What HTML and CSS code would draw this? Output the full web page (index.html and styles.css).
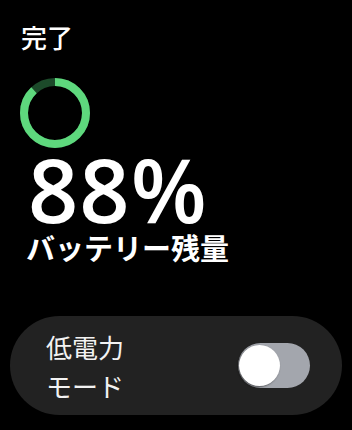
FILE: index.html
```html
<!DOCTYPE html>
<html lang="ja">
<head>
<meta charset="utf-8">
<link rel="stylesheet" href="styles.css">
</head>
<body>
<div class="screen">
  <div class="title">完了</div>
  <svg class="ring" width="70" height="70" viewBox="0 0 70 70">
    <circle cx="35" cy="35" r="31" fill="none" stroke="#1c4a2a" stroke-width="8"/>
    <circle cx="35" cy="35" r="31" fill="none" stroke="#5ed87d" stroke-width="8"
      stroke-dasharray="171.4 194.8" transform="rotate(-90 35 35)"/>
  </svg>
  <div class="pct">88%</div>
  <div class="label">バッテリー残量</div>
  <div class="card">
    <div class="card-text">低電力<br>モード</div>
    <div class="toggle"><div class="knob"></div></div>
  </div>
</div>
</body>
</html>
```
FILE: styles.css
```css
html, body {
  margin: 0;
  padding: 0;
  background: #000;
}
.screen {
  width: 352px;
  height: 430px;
  display: flex;
  flex-direction: column;
  color: #fff;
  font-family: "Noto Sans CJK JP", "Noto Sans", sans-serif;
  overflow: hidden;
}
.title {
  margin: 22px 0 0 21px;
  font-size: 26px;
  line-height: 30px;
  font-weight: 500;
}
.ring {
  display: block;
  margin: 26px 0 0 20px;
}
.pct {
  margin: 3px 0 0 28px;
  font-family: "Open Sans", "Noto Sans", sans-serif;
  font-size: 88px;
  line-height: 76px;
  font-weight: 560;
  letter-spacing: 1px;
}
.label {
  margin: 4px 0 0 26px;
  font-size: 29px;
  line-height: 32px;
  font-weight: 700;
}
.card {
  margin: 53px 10px 0 10px;
  height: 99px;
  border-radius: 50px;
  background: #222;
  display: flex;
  align-items: center;
  justify-content: space-between;
  padding: 0 32px 0 36px;
}
.card-text {
  font-size: 26px;
  line-height: 39px;
  font-weight: 400;
  color: #f2f2f2;
}
.toggle {
  width: 72px;
  height: 45px;
  border-radius: 23px;
  background: #a3a6ad;
  display: flex;
  align-items: center;
  padding-left: 1px;
  box-sizing: border-box;
}
.knob {
  width: 41px;
  height: 41px;
  border-radius: 50%;
  background: #fff;
  box-shadow: -1px 1px 2px rgba(0,0,0,0.5);
}
```
